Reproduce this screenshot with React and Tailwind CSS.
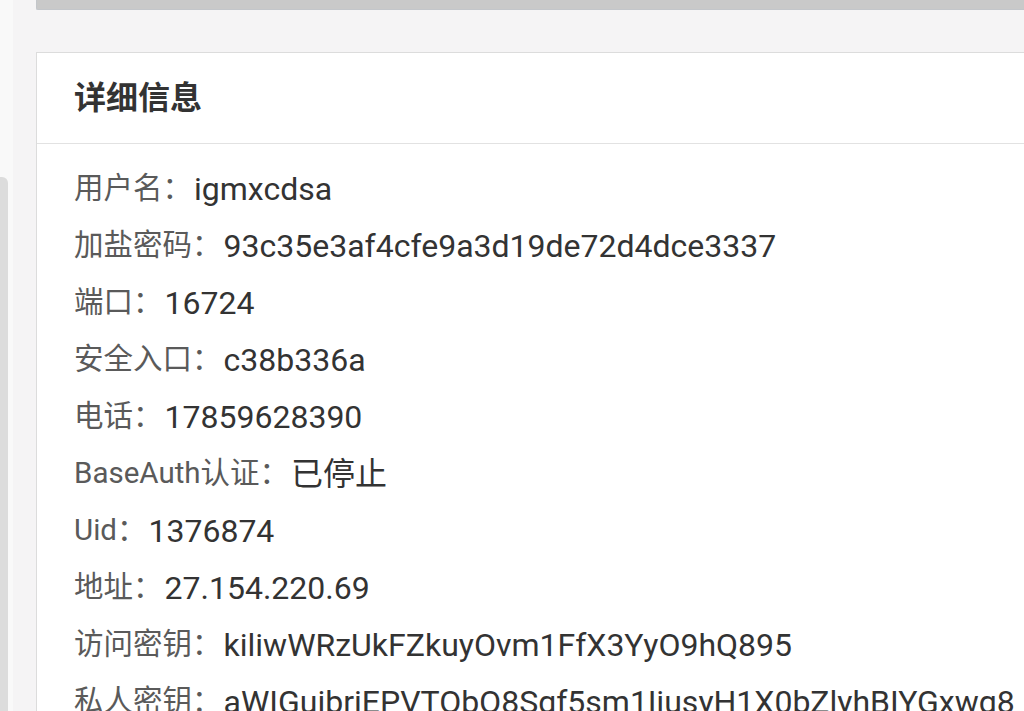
const rows = [
  ['用户名：', 'igmxcdsa'],
  ['加盐密码：', '93c35e3af4cfe9a3d19de72d4dce3337'],
  ['端口：', '16724'],
  ['安全入口：', 'c38b336a'],
  ['电话：', '17859628390'],
  ['BaseAuth认证：', '已停止'],
  ['Uid：', '1376874'],
  ['地址：', '27.154.220.69'],
  ['访问密钥：', 'kiliwWRzUkFZkuyOvm1FfX3YyO9hQ895'],
  ['私人密钥：', 'aWIGuibriEPVTObQ8Sgf5sm1IjusyH1X0bZlyhBIYGxwg8'],
];

const App = () => {
  return (
    <div
      className="flex h-[711px] w-[1024px] overflow-hidden bg-[#f5f4f5]"
      style={{ fontFamily: 'Roboto, "Noto Sans CJK SC", sans-serif' }}
    >
      {/* left sidebar edge */}
      <div className="w-[13px] shrink-0 bg-[#f9f9f9] pt-[177px]">
        <div className="h-full w-[8px] rounded-tr-[6px] bg-[#dcdcdc]" />
      </div>

      <div className="flex min-w-0 flex-1 flex-col pl-[23px]">
        {/* bottom of the panel above */}
        <div className="h-[10px] shrink-0 rounded-bl-[2px] border-b border-l border-[#c3c6ca] bg-[#c9c9c9]" />

        {/* details card */}
        <div className="mt-[42px] flex-1 border-l border-t border-[#dcdcdc] bg-white">
          <div className="flex h-[91px] items-center border-b border-[#e2e2e2] pl-[37px]">
            <h2 className="text-[32px] font-bold text-[#333]">详细信息</h2>
          </div>
          <div className="pl-[37px] pt-[16px]">
            {rows.map(([label, value]) => (
              <div key={label} className="flex h-[57px] items-center whitespace-nowrap">
                <span className="text-[29.5px] text-[#5a5a5a]">{label}</span>
                <span className="pl-[2px] text-[32px] text-[#333]">{value}</span>
              </div>
            ))}
          </div>
        </div>
      </div>
    </div>
  );
};

export default App;
